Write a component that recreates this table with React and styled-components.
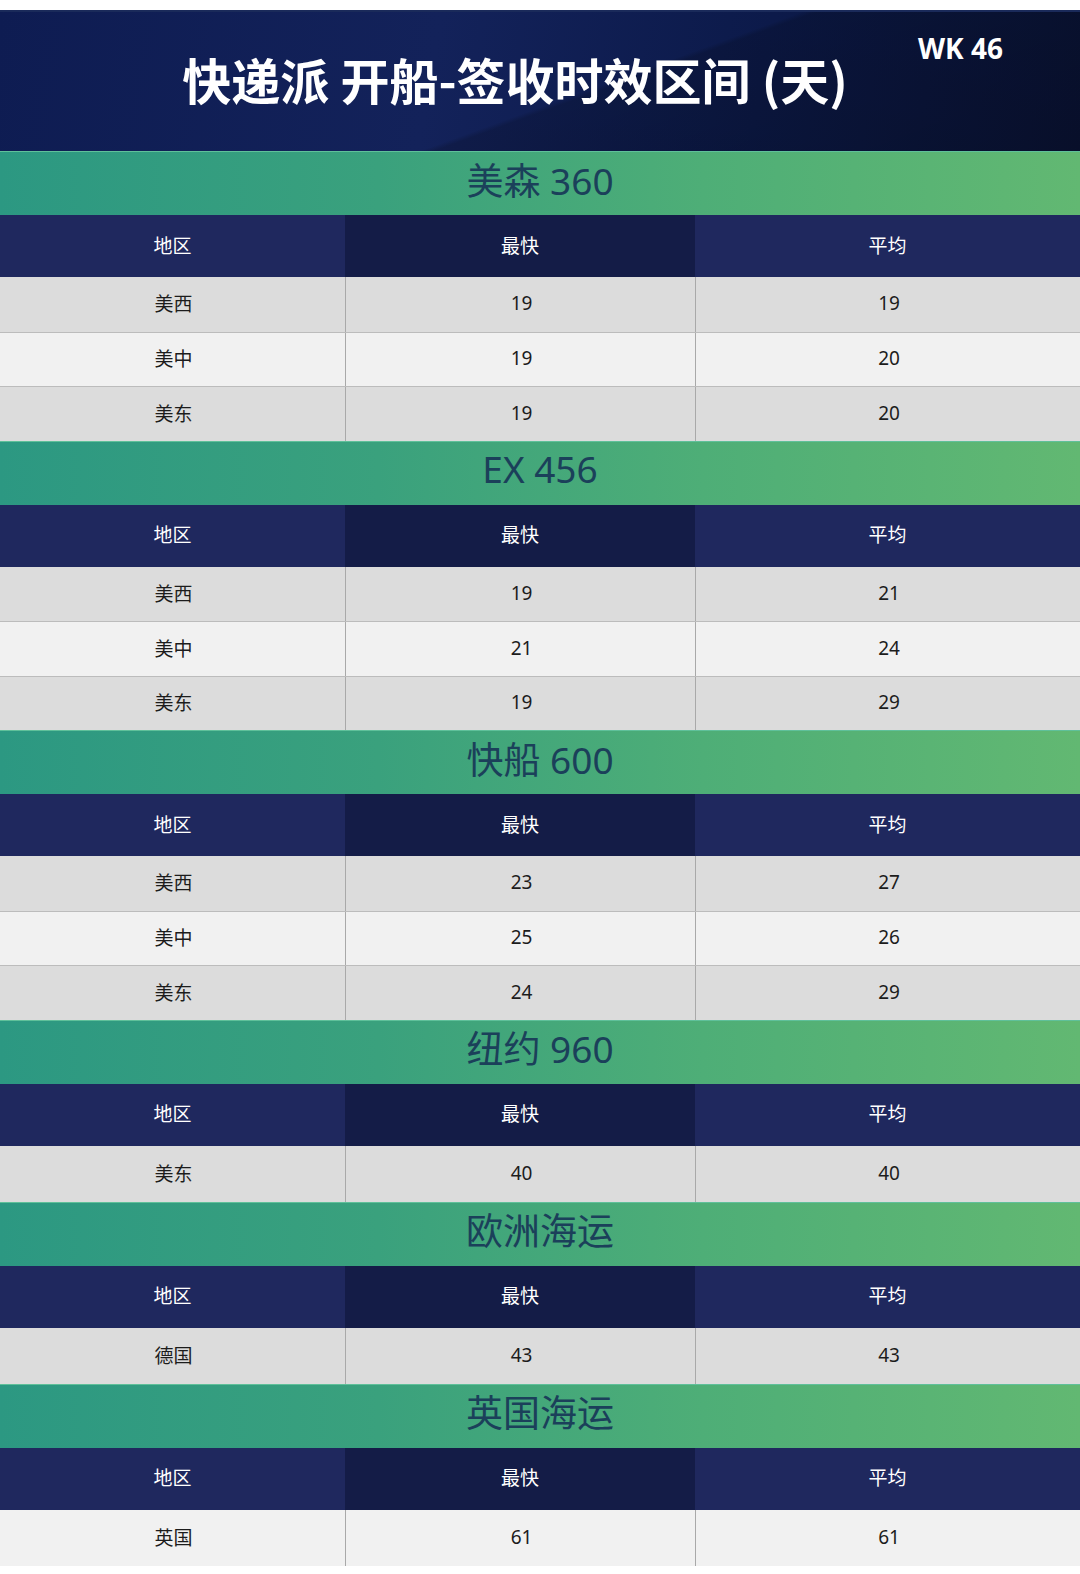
import styled, { createGlobalStyle } from "styled-components";

const GlobalStyle = createGlobalStyle`
  html, body {
    margin: 0;
    padding: 0;
    background: #ffffff;
  }
  body {
    font-family: "Noto Sans", "Noto Sans CJK SC", sans-serif;
  }
`;

const sections = [
  { name: "美森 360", rows: [["美西", 19, 19], ["美中", 19, 20], ["美东", 19, 20]] },
  { name: "EX 456", rows: [["美西", 19, 21], ["美中", 21, 24], ["美东", 19, 29]] },
  { name: "快船 600", rows: [["美西", 23, 27], ["美中", 25, 26], ["美东", 24, 29]] },
  { name: "纽约 960", rows: [["美东", 40, 40]] },
  { name: "欧洲海运", rows: [["德国", 43, 43]] },
  { name: "英国海运", rows: [["英国", 61, 61]], light: true },
];

const App = () => {
  return (
    <Page>
      <GlobalStyle />
      <Banner>
        <Title>快递派 开船-签收时效区间 (天)</Title>
        <Week>WK 46</Week>
      </Banner>
      {sections.map((s) => (
        <section key={s.name}>
          <Band>{s.name}</Band>
          <HeadRow>
            <HeadCell>地区</HeadCell>
            <HeadCell $dark>最快</HeadCell>
            <HeadCell>平均</HeadCell>
          </HeadRow>
          {s.rows.map((r, i) => (
            <DataRow
              key={r[0]}
              $light={s.light ? true : i % 2 === 1}
              $ruled={i > 0}
              $tall={s.rows.length === 1}
            >
              <Cell>{r[0]}</Cell>
              <Cell>{r[1]}</Cell>
              <Cell>{r[2]}</Cell>
            </DataRow>
          ))}
        </section>
      ))}
    </Page>
  );
};

const Page = styled.main`
  width: 1080px;
  padding-top: 10px;
  padding-bottom: 9px;
  background: #ffffff;
`;

const Banner = styled.header`
  position: relative;
  height: 141px;
  display: flex;
  align-items: center;
  justify-content: center;
  background:
    linear-gradient(160deg, rgba(255,255,255,0) 0%, rgba(255,255,255,0) 55%, rgba(0,0,0,0.18) 56%, rgba(0,0,0,0.25) 100%),
    linear-gradient(100deg, #0e1c52 0%, #13225a 40%, #0c1a4a 70%, #0a1438 100%);
  box-shadow: inset 0 2px 0 #1a2a5a;
`;

const Title = styled.h1`
  margin: 0 0 4px -50px;
  font-family: "Noto Sans CJK SC", "Noto Sans", sans-serif;
  font-size: 49px;
  font-weight: 700;
  color: #ffffff;
  letter-spacing: 0;
`;

const Week = styled.div`
  position: absolute;
  top: 19px;
  right: 77px;
  font-family: "Open Sans", "Noto Sans", sans-serif;
  font-size: 28px;
  font-weight: 700;
  color: #ffffff;
`;

const Band = styled.h2`
  margin: 0;
  height: 64px;
  padding-bottom: 10px;
  display: flex;
  align-items: center;
  justify-content: center;
  background: linear-gradient(90deg, #2c9882 0%, #3aa17d 35%, #4eae77 65%, #62b872 100%);
  border-top: 1px solid #5fc09a;
  box-sizing: border-box;
  font-family: "Noto Sans", "Noto Sans CJK SC", sans-serif;
  font-size: 37px;
  font-weight: 400;
  color: #1b405a;
`;

const Grid = styled.div`
  display: grid;
  grid-template-columns: 345px 350px 385px;
`;

const HeadRow = styled(Grid)`
  height: 62px;
`;

const HeadCell = styled.div`
  display: flex;
  align-items: center;
  justify-content: center;
  padding-bottom: 4px;
  background: ${(p) => (p.$dark ? "#141c47" : "#1f285e")};
  font-family: "Noto Sans CJK SC", "Noto Sans", sans-serif;
  font-size: 19px;
  color: #ffffff;
`;

const DataRow = styled(Grid)`
  height: ${(p) => (p.$tall ? "56px" : "54.5px")};
  box-sizing: border-box;
  background: ${(p) => (p.$light ? "#f1f1f1" : "#dcdcdc")};
  border-top: ${(p) => (p.$ruled ? "1px solid #bcbcbc" : "none")};
`;

const Cell = styled.div`
  display: flex;
  align-items: center;
  justify-content: center;
  padding-left: 2px;
  padding-bottom: 2px;
  font-family: "Noto Sans", "Noto Sans CJK SC", sans-serif;
  font-size: 19px;
  color: #1c1c1c;
  & + & {
    border-left: 1px solid #a9a9a9;
  }
`;

export default App;
